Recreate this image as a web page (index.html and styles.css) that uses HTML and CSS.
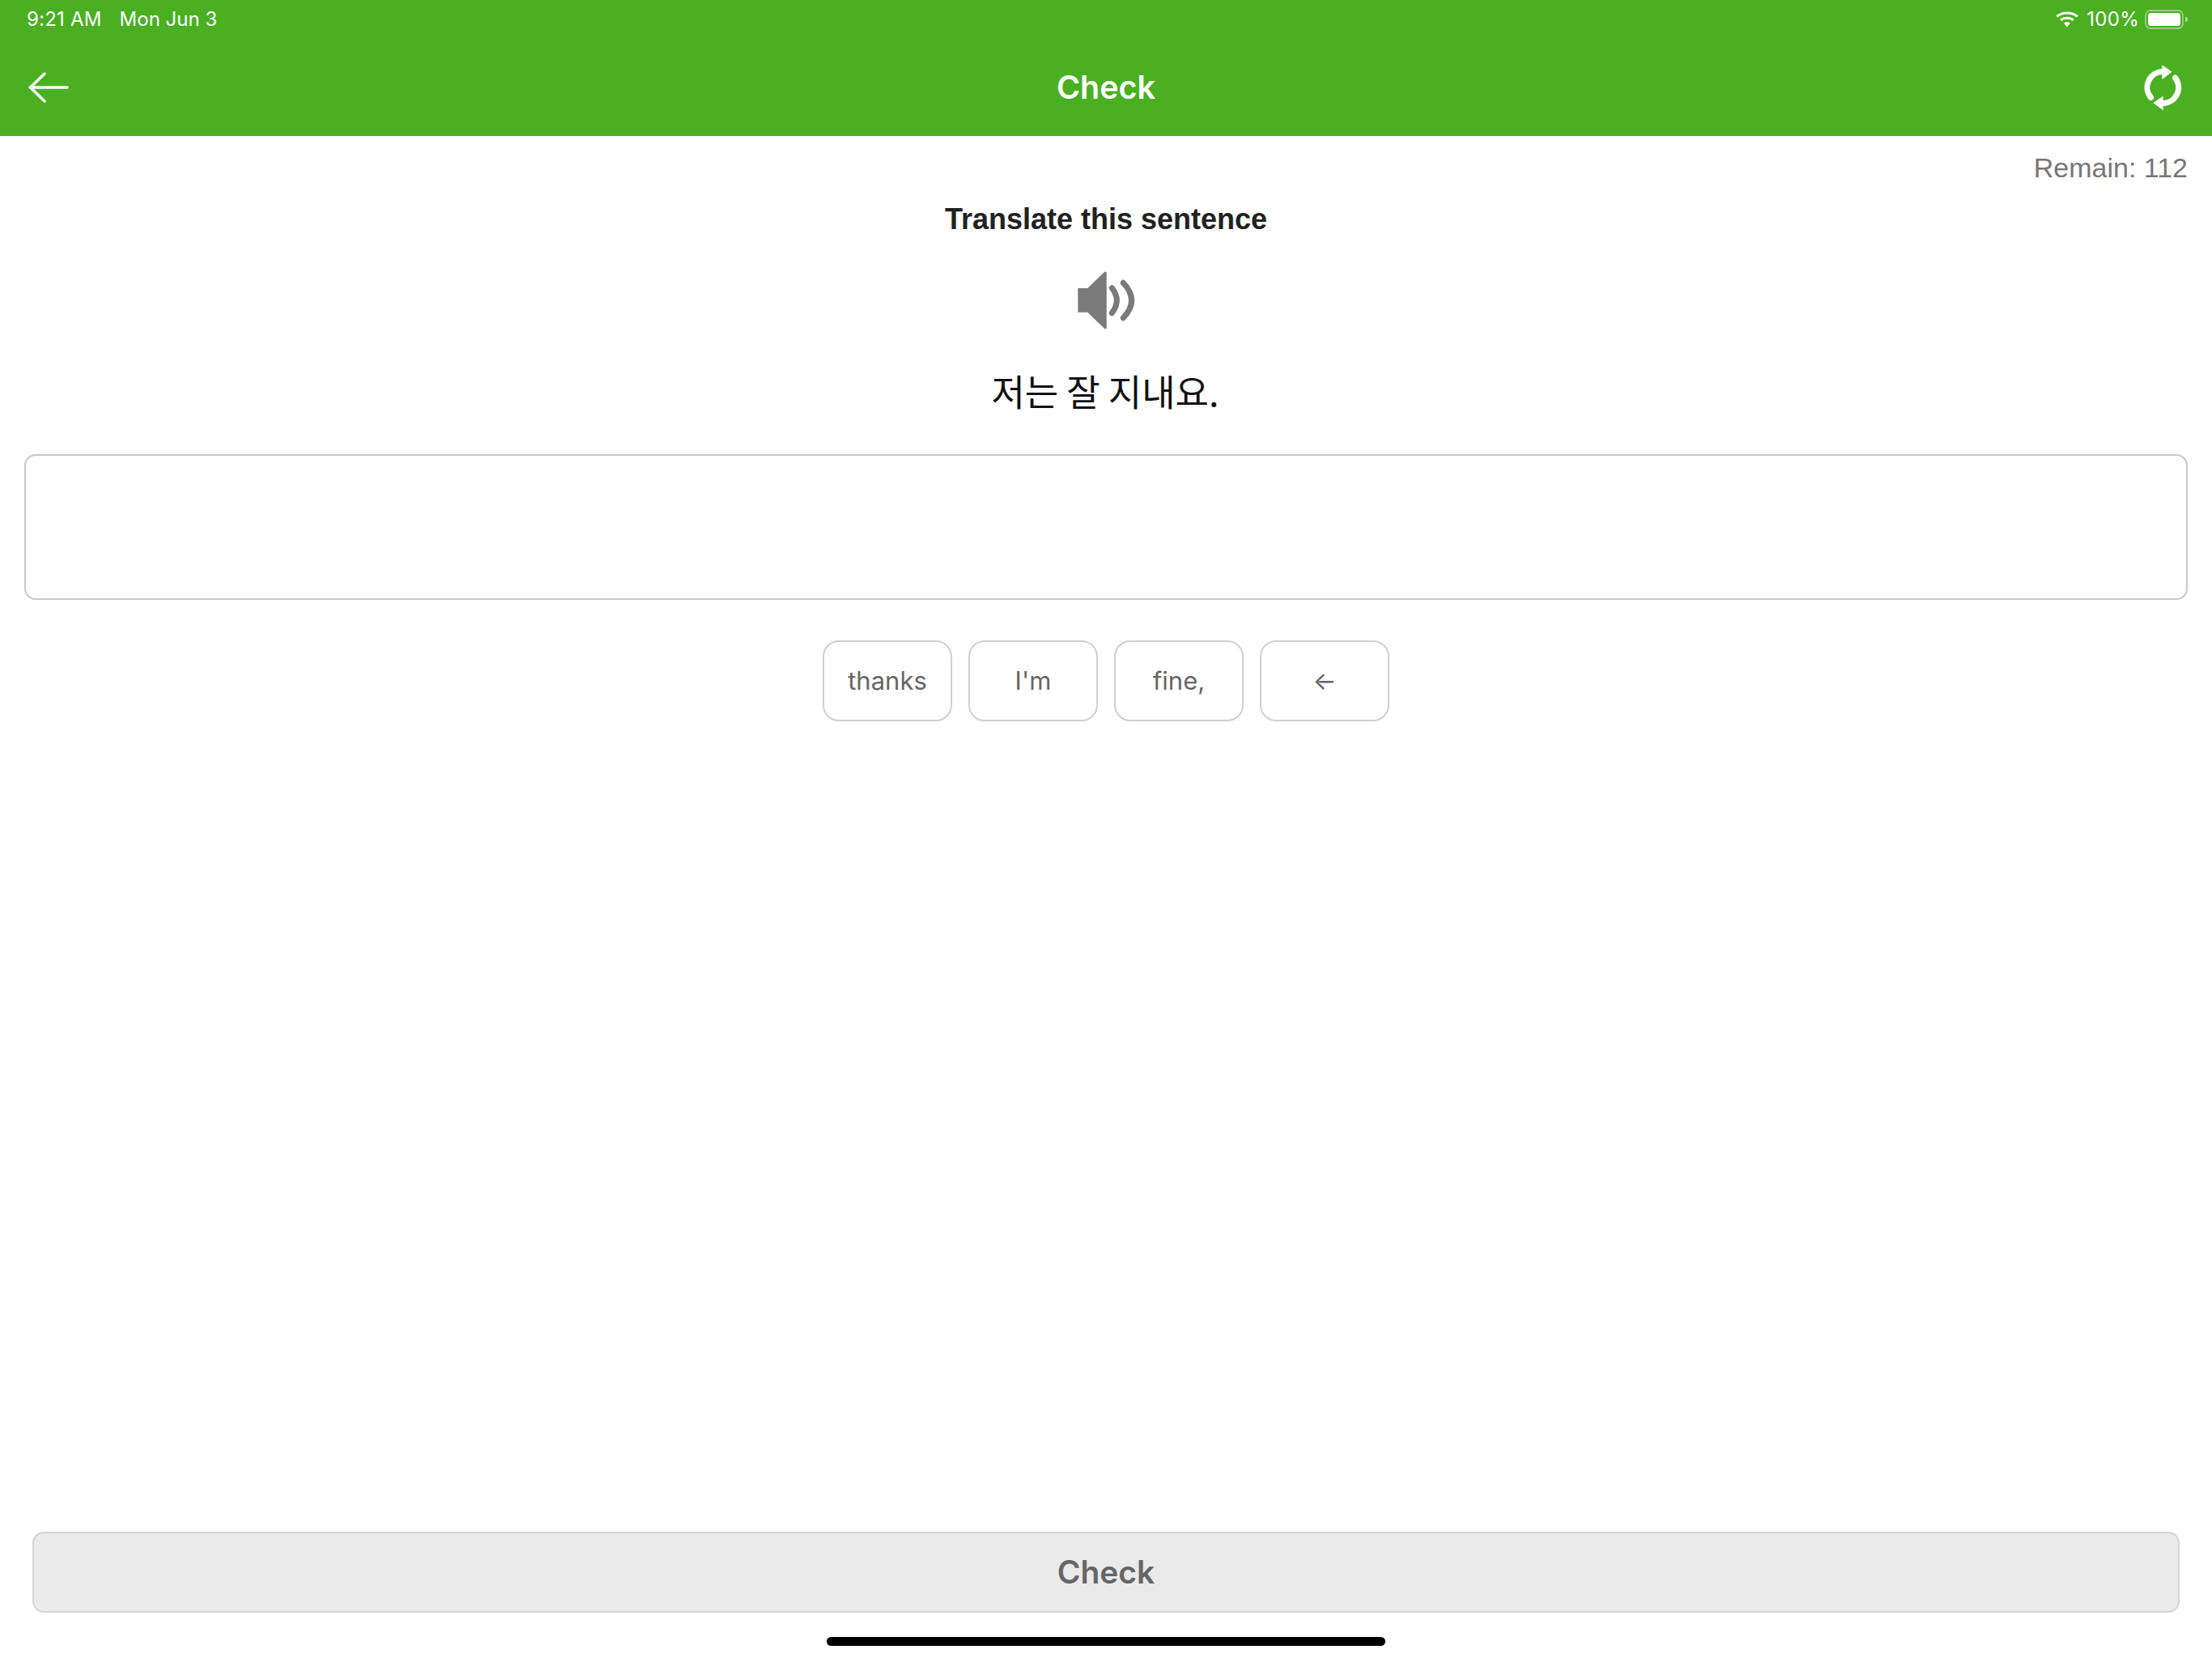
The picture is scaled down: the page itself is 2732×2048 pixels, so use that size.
FILE: index.html
```html
<!DOCTYPE html>
<html lang="en">
<head>
<meta charset="utf-8">
<title>Check</title>
<link rel="stylesheet" href="styles.css">
</head>
<body>
<div class="app">
  <header class="header">
    <div class="status">
      <div class="status-left"><span class="time">9:21 AM</span><span>Mon Jun 3</span></div>
      <div class="status-right">
        <svg class="wifi" viewBox="2 0 24 20" width="28" height="20" preserveAspectRatio="none"><path d="M14 3.600c3.900 0 7.400 1.500 10 4l1.900-2.100A17.300 17.300 0 0 0 14 .6 17.300 17.300 0 0 0 2.100 5.500L4 7.600c2.600-2.500 6.100-4 10-4z" fill="#fff"/><path d="M14 9.800c2.200 0 4.200.8 5.700 2.200l2-2.100A11.200 11.200 0 0 0 14 6.800c-3 0-5.700 1.200-7.700 3.100l2 2.100a8.200 8.200 0 0 1 5.700-2.200z" fill="#fff"/><path d="M14 13.200c-1.300 0-2.500.5-3.400 1.300L14 19.400l3.400-4.900c-.9-.8-2.100-1.300-3.400-1.300z" fill="#fff"/></svg>
        <span class="battery-pct">100%</span>
        <svg class="battery" viewBox="0 0 54 24" width="54" height="24"><rect x="1" y="1" width="46" height="22" rx="6" fill="none" stroke="#fff" stroke-opacity=".4" stroke-width="2"/><rect x="4" y="4" width="40" height="16" rx="3.500" fill="#fff"/><path d="M50 8.500c1.800.6 3 1.900 3 3.500s-1.200 2.900-3 3.500z" fill="#fff" fill-opacity=".5"/></svg>
      </div>
    </div>
    <nav class="nav">
      <svg class="back" viewBox="0 0 50 38" width="50" height="38"><path d="M2 19h46M20 2 2.500 19 20 36" fill="none" stroke="#fff" stroke-width="3.500" stroke-linecap="round" stroke-linejoin="round"/></svg>
      <div class="nav-title">Check</div>
      <svg class="refresh" viewBox="0 0 60 60" width="60" height="60"><path d="M15.500 42.500A19.500 19.500 0 0 1 31 10.500M45.500 18A19.500 19.500 0 0 1 30 49.500" fill="none" stroke="#fff" stroke-width="7" stroke-linecap="round"/><path d="M29.300 2.300 41.700 10.700 29.300 20zM30.700 40.700 18.300 49 30.700 58.300z" fill="#fff"/></svg>
    </nav>
  </header>
  <main class="main">
    <div class="remain">Remain: 112</div>
    <h1 class="prompt">Translate this sentence</h1>
    <svg class="speaker" viewBox="0 0 72 76" width="72" height="76"><path d="M1.300 22H13.300L34 2q2.700-1.800 2.700 1.700V70q0 3.500-2.700 1.700L13.300 51.700H1.300z" fill="#7a7a7a"/><path d="M43.300 21.700Q55.300 37 43.300 52.700M57.300 15.300Q78 37 57.300 58.700" fill="none" stroke="#7a7a7a" stroke-width="7" stroke-linecap="round"/></svg>
    <p class="sentence">저는 잘 지내요.</p>
    <div class="answer"></div>
    <div class="tokens">
      <div class="token">thanks</div>
      <div class="token">I'm</div>
      <div class="token">fine,</div>
      <div class="token">←</div>
    </div>
    <div class="footer">
      <div class="check-btn">Check</div>
      <div class="home-bar"></div>
    </div>
  </main>
</div>
</body>
</html>
```
FILE: styles.css
```css
* { box-sizing: border-box; }
html, body { margin: 0; padding: 0; background: #fff; }
.app {
  width: 2732px;
  height: 2048px;
  display: flex;
  flex-direction: column;
  overflow: hidden;
}
.header {
  height: 168px;
  background: #4ab022;
  color: #fff;
  flex: none;
}
.status {
  height: 48px;
  padding: 0 29px 0 33px;
  display: flex;
  justify-content: space-between;
  align-items: center;
  font: 400 24px/24px Inter, sans-serif;
}
.status-left { display: flex; gap: 22px; }
.time { letter-spacing: .2px; }
.status-right { display: flex; align-items: center; gap: 7px; }
.battery-pct { letter-spacing: .3px; }
.wifi { display: block; margin-right: 3px; }
.nav {
  height: 120px;
  padding: 0 31px;
  display: grid;
  grid-template-columns: 1fr auto 1fr;
  align-items: center;
}
.back { margin-left: 4px; }
.refresh { justify-self: end; }
.nav-title { font: 600 39.500px/48px Inter, sans-serif; }
.main {
  flex: 1;
  display: flex;
  flex-direction: column;
  align-items: center;
  min-height: 0;
}
.remain {
  align-self: flex-end;
  padding: 18px 30px 0 0;
  font: 400 34px/42px "Liberation Sans", sans-serif;
  color: #777;
}
.prompt {
  margin: 22px 0 0;
  font: 700 36px/42px "Liberation Sans", sans-serif;
  color: #222;
}
.speaker { margin-top: 42px; display: block; }
.sentence {
  margin: 39px 0 0;
  padding-right: 2px;
  font: 400 45px/68px "Noto Sans CJK KR", sans-serif;
  color: #111;
}
.answer {
  align-self: stretch;
  margin: 44px 30px 0;
  height: 180px;
  border: 2px solid #c8c8c8;
  border-radius: 14px;
}
.tokens { margin-top: 50px; display: flex; gap: 20px; }
.token {
  width: 160px;
  height: 100px;
  border: 2px solid #d0d0d0;
  border-radius: 20px;
  display: flex;
  align-items: center;
  justify-content: center;
  font: 400 31px/40px Inter, sans-serif;
  color: #666;
}
.footer {
  margin-top: auto;
  align-self: stretch;
  display: flex;
  flex-direction: column;
  align-items: center;
  padding: 0 40px 15px;
}
.check-btn {
  align-self: stretch;
  height: 100px;
  background: #eaeaea;
  border: 2px solid #d4d4d4;
  border-radius: 14px;
  display: flex;
  align-items: center;
  justify-content: center;
  font: 600 39px/48px Inter, sans-serif;
  color: #666;
}
.home-bar {
  margin-top: 30px;
  width: 690px;
  height: 11px;
  border-radius: 6px;
  background: #000;
}
```
